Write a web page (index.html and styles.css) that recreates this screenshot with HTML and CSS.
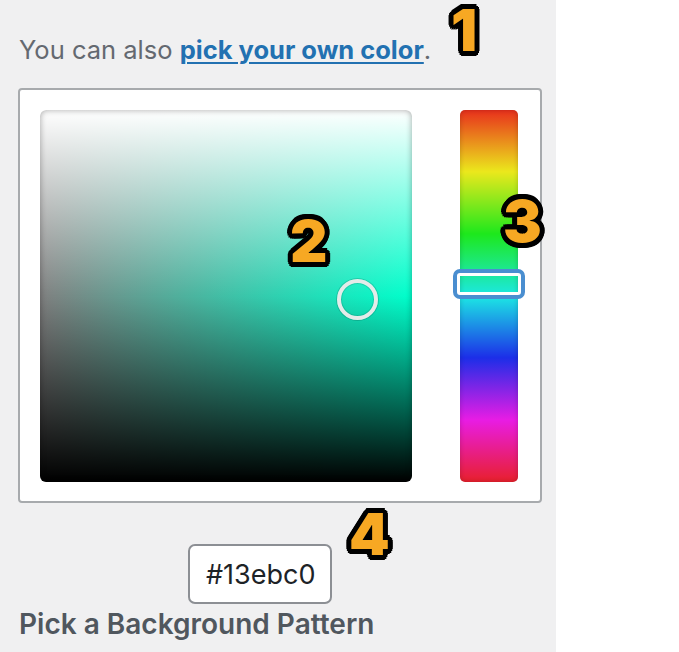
FILE: index.html
```html
<!DOCTYPE html>
<html lang="en">
<head>
  <meta charset="UTF-8">
  <meta name="viewport" content="width=device-width, initial-scale=1.0">
  <title>Pick your own color</title>
  <link rel="stylesheet" href="styles.css">
</head>
<body>
  <div class="page">
    <aside class="sidebar">
      <p class="intro">You can also <a href="#" class="intro-link">pick your own color</a>.</p>
      <div class="picker">
        <div class="square">
          <span class="square-cursor"></span>
        </div>
        <div class="strip">
          <span class="strip-handle"></span>
        </div>
      </div>
      <div class="hex-row">
        <input class="hex-input" type="text" value="#13ebc0" autocomplete="off">
      </div>
      <h3 class="section-title">Pick a Background Pattern</h3>

      <span class="badge badge-1">1</span>
      <span class="badge badge-2">2</span>
      <span class="badge badge-3">3</span>
      <span class="badge badge-4">4</span>
    </aside>
    <main class="content"></main>
  </div>
</body>
</html>
```

FILE: styles.css
```css
:root {
  --sidebar-bg: #f0f0f1;
  --text-muted: #646970;
  --text-strong: #50575e;
  --link: #2271b1;
  --border: #a7aaad;
  --hue-color: hsl(168, 100%, 50%);
  --badge: #f7a823;
}
body {
  margin: 0;
  font-family: Inter, "Liberation Sans", Arial, sans-serif;
  background: #ffffff;
}
.page {
  display: flex;
  height: 652px;
  overflow: hidden;
}
.sidebar {
  position: relative;
  width: 556px;
  flex: none;
  box-sizing: border-box;
  padding: 0 0 0 18px;
  background: var(--sidebar-bg);
}
.content {
  flex: 1;
  background: #ffffff;
}
.intro {
  margin: 34px 0 0 1px;
  font-size: 25.5px;
  line-height: 32px;
  color: var(--text-muted);
}
.intro-link {
  color: var(--link);
  font-weight: bold;
  text-decoration: underline;
  text-decoration-thickness: 2px;
  text-underline-offset: 3px;
}
.picker {
  display: flex;
  gap: 48px;
  width: 524px;
  height: 415px;
  margin-top: 22px;
  box-sizing: border-box;
  padding: 20px 22px 19px 20px;
  background: #ffffff;
  border: 2px solid var(--border);
  border-radius: 4px;
}
.square {
  position: relative;
  width: 372px;
  height: 372px;
  border-radius: 6px;
  background:
    linear-gradient(to bottom, #ffffff 0%, rgba(255, 255, 255, 0) 50%, rgba(0, 0, 0, 0) 50%, #000000 100%),
    linear-gradient(to right, #808080, var(--hue-color));
  box-shadow: inset 0 0 6px rgba(0, 0, 0, 0.35);
}
.square-cursor {
  position: absolute;
  left: 297px;
  top: 169px;
  width: 33px;
  height: 33px;
  border: 4px solid #e4ebe9;
  border-radius: 50%;
  box-shadow: 0 0 0 1px rgba(0, 0, 0, 0.15), inset 0 0 0 1px rgba(0, 0, 0, 0.12);
}
.strip {
  position: relative;
  width: 58px;
  height: 372px;
  border-radius: 5px;
  background: linear-gradient(to bottom,
    #e8301c 0%,
    #ebe81c 16.6%,
    #1de81c 33.3%,
    #1ce8e4 50%,
    #1c2ee8 66.6%,
    #e81ce4 83.3%,
    #e8202c 100%);
  box-shadow: inset 0 0 5px rgba(0, 0, 0, 0.2);
}
.strip-handle {
  position: absolute;
  left: -7px;
  top: 159px;
  width: 64px;
  height: 22px;
  border: 4px solid #4a8ed0;
  border-radius: 7px;
  box-shadow: inset 0 0 0 3px #ffffff;
}
.hex-row {
  display: flex;
  margin: 41px 0 0 170px;
}
.hex-input {
  width: 144px;
  height: 60px;
  box-sizing: border-box;
  padding: 0 8px 0 16px;
  font-family: Inter, "Liberation Sans", Arial, sans-serif;
  font-size: 27px;
  color: #1d2327;
  background: #ffffff;
  border: 2px solid #8c8f94;
  border-radius: 7px;
  outline: none;
}
.section-title {
  margin: 3px 0 0 1px;
  font-size: 28px;
  line-height: 34px;
  font-weight: 600;
  color: var(--text-strong);
}
.badge {
  position: absolute;
  font-family: Inter, "DejaVu Sans", sans-serif;
  font-weight: 900;
  font-size: 58px;
  line-height: 1;
  color: var(--badge);
  text-shadow:
    5px 0 0 #000, -5px 0 0 #000, 0 5px 0 #000, 0 -5px 0 #000,
    3.5px 3.5px 0 #000, -3.5px 3.5px 0 #000, 3.5px -3.5px 0 #000, -3.5px -3.5px 0 #000,
    4.6px 1.9px 0 #000, -4.6px 1.9px 0 #000, 4.6px -1.9px 0 #000, -4.6px -1.9px 0 #000,
    1.9px 4.6px 0 #000, -1.9px 4.6px 0 #000, 1.9px -4.6px 0 #000, -1.9px -4.6px 0 #000;
}
.badge-1 { left: 451px; top: 1px; }
.badge-2 { left: 290px; top: 212px; }
.badge-3 { left: 503px; top: 192px; }
.badge-4 { left: 349px; top: 505px; }
```
